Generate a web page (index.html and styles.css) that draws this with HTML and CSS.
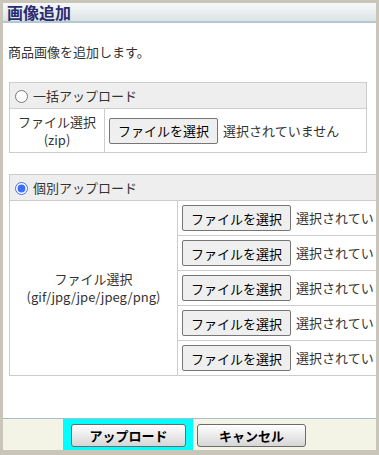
FILE: index.html
```html
<!DOCTYPE html>
<html lang="ja">
<head>
    <meta charset="UTF-8">
    <title>画像追加</title>
    <link rel="stylesheet" href="styles.css">
</head>
<body>
    <div class="dialog">
        <h1 class="title">画像追加</h1>
        <div class="content">
            <p class="desc">商品画像を追加します。</p>

            <table class="upload upload-zip">
                <tr>
                    <th colspan="2"><label><input type="radio" name="mode"> 一括アップロード</label></th>
                </tr>
                <tr>
                    <td class="label">ファイル選択<br>(zip)</td>
                    <td class="field"><button class="file-btn">ファイルを選択</button><span class="none">選択されていません</span></td>
                </tr>
            </table>

            <table class="upload upload-each">
                <tr>
                    <th colspan="2"><label><input type="radio" name="mode" checked> 個別アップロード</label></th>
                </tr>
                <tr>
                    <td class="label" rowspan="5">ファイル選択<br>(gif/jpg/jpe/jpeg/png)</td>
                    <td class="field"><button class="file-btn">ファイルを選択</button><span class="none">選択されていません</span></td>
                </tr>
                <tr>
                    <td class="field"><button class="file-btn">ファイルを選択</button><span class="none">選択されていません</span></td>
                </tr>
                <tr>
                    <td class="field"><button class="file-btn">ファイルを選択</button><span class="none">選択されていません</span></td>
                </tr>
                <tr>
                    <td class="field"><button class="file-btn">ファイルを選択</button><span class="none">選択されていません</span></td>
                </tr>
                <tr>
                    <td class="field"><button class="file-btn">ファイルを選択</button><span class="none">選択されていません</span></td>
                </tr>
            </table>
        </div>
        <div class="footer">
            <span class="focus"><button class="btn">アップロード</button></span>
            <button class="btn btn-cancel">キャンセル</button>
        </div>
    </div>
</body>
</html>
```

FILE: styles.css
```css
* {
    margin: 0;
    padding: 0;
    box-sizing: border-box;
}

body {
    background: #c9c5b9;
    font-family: "Noto Sans CJK JP", "Liberation Sans", sans-serif;
    font-size: 13px;
    color: #333;
}

.dialog {
    margin: 3px 3px 0 3px;
    width: 373px;
    height: 447px;
    background: #fff;
    display: flex;
    flex-direction: column;
    overflow: hidden;
}

h1.title {
    height: 20px;
    padding-left: 4px;
    font-size: 16px;
    line-height: 18px;
    font-weight: bold;
    color: #2b2c70;
    background: linear-gradient(#f7f9f9, #dbe3e5);
    border-bottom: 2px solid #b3c8d6;
}

.content {
    flex: 1;
    padding: 20px 0 0 6px;
    overflow: hidden;
}

.desc {
    line-height: 18px;
    margin-left: -1px;
    margin-bottom: 21px;
}

table.upload {
    border-collapse: collapse;
    white-space: nowrap;
}

.upload-zip {
    width: 358px;
    margin-bottom: 21px;
}

.upload-each {
    width: 420px;
}

.upload th,
.upload td {
    border: 1px solid #ccc;
    line-height: 18px;
}

.upload th {
    background: #eee;
    text-align: left;
    font-weight: normal;
    height: 26px;
    padding: 0 4px;
}

.upload th input {
    width: 13px;
    height: 13px;
    margin: 0 2px 0 1px;
    vertical-align: -2px;
    accent-color: #3d6ef5;
}

.upload td.label {
    text-align: center;
    padding: 3px 5px;
}

.upload-zip td.label {
    width: 95px;
}

.upload-each td.label {
    width: 168px;
}

.upload td.field {
    padding: 3px 4px;
    height: 35px;
}

.upload-zip td.field {
    height: 44px;
}

.file-btn {
    font-family: inherit;
    font-size: 13px;
    color: #000;
    height: 26px;
    padding: 0 8px;
    background: #efefef;
    border: 1px solid #767676;
    border-radius: 2px;
    vertical-align: middle;
}

.none {
    margin-left: 5px;
    vertical-align: middle;
}

.footer {
    height: 32px;
    background: #f3f4e6;
    border-top: 1px solid #a9bccb;
    display: flex;
    align-items: stretch;
    padding-left: 60px;
}

.footer .focus {
    background: #00ffff;
    padding: 5px 7px 0 8px;
    margin-right: 4px;
}

.btn {
    width: 115px;
    height: 23px;
    font-family: "Noto Sans CJK JP", sans-serif;
    font-size: 13px;
    font-weight: bold;
    color: #000;
    background: linear-gradient(#ffffff, #d6d6d6);
    border: 1px solid #6b6b6b;
    border-radius: 3px;
}

.btn-cancel {
    width: 109px;
    margin-top: 5px;
}
```
